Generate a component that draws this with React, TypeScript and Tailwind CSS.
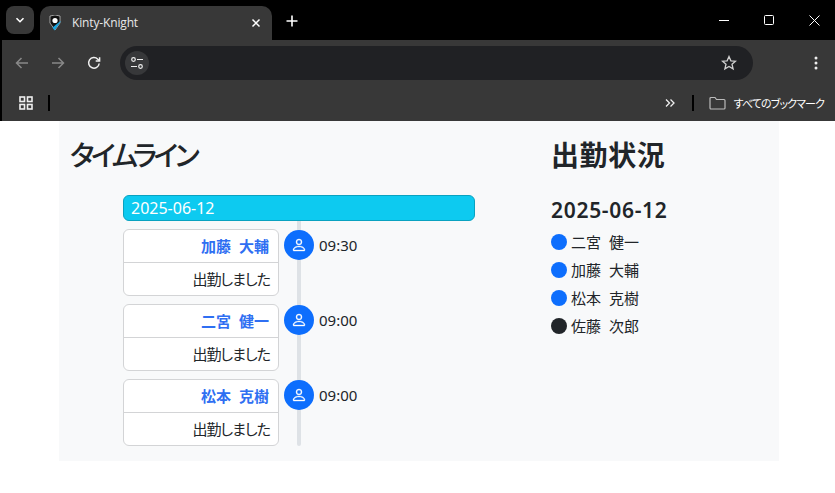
import React from "react";

const jp = { fontFamily: '"Noto Sans", "Noto Sans CJK JP", sans-serif' };

function Person() {
  return (
    <svg width="16" height="16" viewBox="0 0 16 16" fill="#fff" stroke="#fff" strokeWidth="0.35">
      <path d="M8 8a3 3 0 1 0 0-6 3 3 0 0 0 0 6m2-3a2 2 0 1 1-4 0 2 2 0 0 1 4 0m4 8c0 1-1 1-1 1H3s-1 0-1-1 1-4 6-4 6 3 6 4m-1-.004c-.001-.246-.154-.986-.832-1.664C11.516 10.68 10.289 10 8 10s-3.516.68-4.168 1.332c-.678.678-.83 1.418-.832 1.664z" />
    </svg>
  );
}

function Entry({ name, time }: { name: string; time: string }) {
  return (
    <div className="flex items-start h-[67px] mb-2">
      <div className="w-[156px] h-[67px] bg-white border border-[#d3d4d6] rounded-[6px] flex flex-col text-[15px] text-[#212529]">
        <div className="h-[33px] flex items-center justify-end pr-[9px] font-bold text-[#2f6ff2] border-b border-[#d3d4d6] [word-spacing:4px]">
          {name}
        </div>
        <div className="flex-1 flex items-center justify-end pr-[8px] tracking-[-1px] [font-feature-settings:'palt']">出勤しました</div>
      </div>
      <div className="relative z-10 ml-[5px] mt-px w-[30px] h-[30px] rounded-full bg-[#0d6efd] flex items-center justify-center">
        <Person />
      </div>
      <div className="ml-[5px] mt-[5px] text-[15px] leading-[22px] text-[#212529]">{time}</div>
    </div>
  );
}

function Status({ name, color }: { name: string; color: string }) {
  return (
    <div className="flex items-center h-[28px] text-[15px] text-[#212529] [word-spacing:4px]">
      <span className={`w-4 h-4 rounded-full mr-1 ${color}`} />
      <span>{name}</span>
    </div>
  );
}

export default function App() {
  return (
    <div className="w-[835px] h-[493px] bg-white overflow-hidden" style={jp}>
      <header className="h-[121px] bg-[#383838] flex flex-col border-l-2 border-black">
        <div className="h-10 bg-black flex items-end text-white shrink-0">
          <div className="w-7 h-7 mb-[6px] ml-[4px] rounded-lg bg-[#383838] flex items-center justify-center">
            <svg width="10" height="10" viewBox="0 0 10 10" fill="none" stroke="#fff" strokeWidth="1.6"><path d="M1.5 3.2 5 6.7l3.5-3.5" /></svg>
          </div>
          <div className="ml-[6px] w-[232px] h-[34px] bg-[#383838] rounded-t-[10px] flex items-center pl-[9px] pr-[11px]">
            <svg width="12" height="16" viewBox="0 0 12 16">
              <path d="M1 1 6 0l5 1v7l-5 7-5-7z" fill="#111" stroke="#eee" strokeWidth=".6" />
              <path d="M11.5 7 5.5 15.5 3.5 12.5 11.5 6z" fill="#19a5e0" />
              <circle cx="6" cy="5.5" r="2.6" fill="#fff" />
            </svg>
            <span className="ml-[11px] text-[12px] tracking-[-0.15px] text-[#e8e8e8] flex-1" style={{ fontFamily: '"Open Sans", sans-serif' }}>Kinty-Knight</span>
            <svg width="10" height="10" viewBox="0 0 10 10" stroke="#fff" strokeWidth="1.5"><path d="M1.5 1.5l7 7M8.5 1.5l-7 7" /></svg>
          </div>
          <div className="ml-[14px] mb-[13px]">
            <svg width="12" height="12" viewBox="0 0 12 12" stroke="#fff" strokeWidth="1.6"><path d="M6 .5v11M.5 6h11" /></svg>
          </div>
          <div className="ml-auto flex items-center h-10 pr-[15px] gap-[35px]">
            <svg width="10" height="10" viewBox="0 0 10 10" stroke="#fff"><path d="M0 5.5h10" /></svg>
            <svg width="10" height="10" viewBox="0 0 10 10" fill="none" stroke="#fff"><rect x=".5" y=".5" width="9" height="9" rx="1" /></svg>
            <svg width="11" height="11" viewBox="0 0 11 11" stroke="#fff"><path d="M.5.5l10 10M10.5.5l-10 10" /></svg>
          </div>
        </div>
        <div className="h-[46px] flex items-center shrink-0">
          <svg className="ml-[12px]" width="16" height="16" viewBox="0 0 16 16" fill="none" stroke="#888" strokeWidth="1.5"><path d="M14 8H2.5M7.5 3l-5 5 5 5" /></svg>
          <svg className="ml-5" width="16" height="16" viewBox="0 0 16 16" fill="none" stroke="#888" strokeWidth="1.5"><path d="M2 8h11.5M8.5 3l5 5-5 5" /></svg>
          <svg className="ml-[20px]" width="16" height="16" viewBox="0 0 16 16" fill="none" stroke="#f0f0f0" strokeWidth="1.5"><path d="M13.2 8.5A5.3 5.3 0 1 1 11.8 4.2L13.4 5.8" /><path d="M13.6 2.2v3.9H9.7" /></svg>
          <div className="ml-[18px] w-[633px] h-[34px] rounded-full bg-[#202124] flex items-center pl-[5px] pr-4">
            <div className="w-6 h-6 rounded-full bg-[#37383a] flex items-center justify-center">
              <svg width="14" height="14" viewBox="0 0 14 14" fill="none" stroke="#eee" strokeWidth="1.2"><circle cx="3.5" cy="3.5" r="1.8" /><path d="M7 3.5h6M1 10.5h6" /><circle cx="10.5" cy="10.5" r="1.8" /></svg>
            </div>
            <svg className="ml-auto" width="16" height="16" viewBox="0 0 16 16" fill="none" stroke="#d0d0d0" strokeWidth="1.3"><path d="M8 1.5l1.9 4.3 4.6.4-3.5 3 1.1 4.6L8 11.4l-4.1 2.4L5 9.2l-3.5-3 4.6-.4z" /></svg>
          </div>
          <svg className="ml-auto mr-[17px]" width="4" height="14" viewBox="0 0 4 14" fill="#eee"><circle cx="2" cy="2" r="1.5" /><circle cx="2" cy="7" r="1.5" /><circle cx="2" cy="12" r="1.5" /></svg>
        </div>
        <div className="h-[34px] flex items-center text-white shrink-0">
          <svg className="ml-4" width="16" height="16" viewBox="0 0 16 16" fill="none" stroke="#eee" strokeWidth="1.6"><rect x="2" y="2" width="4.5" height="4.5" /><rect x="9.5" y="2" width="4.5" height="4.5" /><rect x="2" y="9.5" width="4.5" height="4.5" /><rect x="9.5" y="9.5" width="4.5" height="4.5" /></svg>
          <div className="ml-[14px] w-[2px] h-4 bg-black" />
          <svg className="ml-auto" width="10" height="10" viewBox="0 0 10 10" fill="none" stroke="#eee" strokeWidth="1.3"><path d="M1 1.5 4.5 5 1 8.5M5.5 1.5 9 5 5.5 8.5" /></svg>
          <div className="ml-[17px] w-[2px] h-4 bg-black" />
          <svg className="ml-[15px]" width="17" height="14" viewBox="0 0 17 14" fill="none" stroke="#bbb" strokeWidth="1.2"><path d="M1 2.5a1 1 0 0 1 1-1h4l1.5 2H15a1 1 0 0 1 1 1V12a1 1 0 0 1-1 1H2a1 1 0 0 1-1-1z" /></svg>
          <span className="ml-[8px] mr-[11px] text-[11px] tracking-[-0.9px] text-white [font-feature-settings:'palt']" style={{ fontFamily: '"Noto Sans CJK JP", sans-serif' }}>すべてのブックマーク</span>
        </div>
      </header>

      <main className="ml-[59px] w-[720px] h-[340px] bg-[#f8f9fa] flex">
        <section className="w-[491px] pl-[11px]">
          <h1 className="h-[74px] pt-[14px] text-[28px] leading-[40px] font-medium tracking-[-3.5px] text-[#212529] [font-feature-settings:'palt']">タイムライン</h1>
          <div className="ml-[53px] w-[352px]">
            <div className="h-[26px] bg-[#0dcaf0] border border-[#0aa2c0] rounded-[6px] pl-[7px] flex items-center text-[16px] text-white">2025-06-12</div>
            <div className="relative pt-2">
              <div className="absolute left-[174px] top-0 bottom-0 w-1 bg-[#dee2e6] rounded-b" />
              <Entry name="加藤 大輔" time="09:30" />
              <Entry name="二宮 健一" time="09:00" />
              <Entry name="松本 克樹" time="09:00" />
            </div>
          </div>
        </section>
        <section className="flex-1 pl-[1px]">
          <h1 className="h-[64px] pt-[14px] text-[28px] leading-[40px] font-semibold tracking-[0.6px] text-[#212529]">出勤状況</h1>
          <h2 className="h-[37px] pt-[9px] text-[21px] leading-[32px] font-semibold tracking-[0.7px] text-[#212529]">2025-06-12</h2>
          <div className="mt-[6px]">
            <Status name="二宮 健一" color="bg-[#0d6efd]" />
            <Status name="加藤 大輔" color="bg-[#0d6efd]" />
            <Status name="松本 克樹" color="bg-[#0d6efd]" />
            <Status name="佐藤 次郎" color="bg-[#212529]" />
          </div>
        </section>
      </main>
    </div>
  );
}
